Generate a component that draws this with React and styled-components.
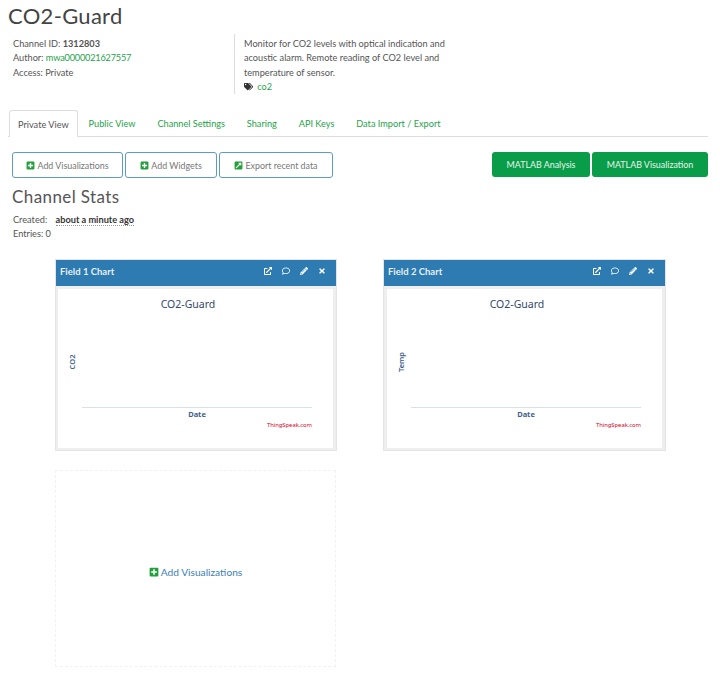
import React from "react";
import styled, { createGlobalStyle } from "styled-components";
import {
  FaPlusSquare,
  FaExternalLinkSquareAlt,
  FaExternalLinkAlt,
  FaRegComment,
  FaPencilAlt,
  FaTimes,
  FaTags,
} from "react-icons/fa";

const GlobalStyle = createGlobalStyle`
  body {
    margin: 0;
    background: #fff;
    color: #555;
    font-family: Lato, "Noto Sans", sans-serif;
    font-size: 9.2px;
  }
`;

const Page = styled.div`
  width: 720px;
  height: 675px;
  overflow: hidden;
  padding: 0 12px 0 8px;
  box-sizing: border-box;
`;

const Title = styled.h1`
  margin: 0;
  padding-top: 2px;
  height: 32px;
  font-family: Lato, sans-serif;
  font-weight: 400;
  font-size: 22px;
  line-height: 27px;
  letter-spacing: 0.3px;
  color: #444;
`;

const Info = styled.div`
  display: flex;
  height: 60px;
  padding-left: 5px;
`;

const InfoLeft = styled.div`
  width: 221px;
  line-height: 14.3px;
  padding-top: 3px;
`;

const InfoRight = styled.div`
  width: 214px;
  padding-left: 9px;
  border-left: 1px solid #ddd;
  line-height: 14.3px;
  padding-top: 3px;
`;

const GreenLink = styled.a`
  color: #1fa34a;
  letter-spacing: ${(p) => (p.$tight ? "-0.2px" : "0")};
`;

const TagRow = styled.div`
  display: flex;
  align-items: center;
  gap: 4px;
  color: #333;
`;

const Tabs = styled.div`
  display: flex;
  margin-top: 16px;
  height: 26px;
  padding-left: 1px;
  border-bottom: 1px solid #ddd;
`;

const Tab = styled.div`
  height: ${(p) => (p.$active ? "27px" : "26px")};
  box-sizing: border-box;
  padding: 0 ${(p) => (p.$active ? "8px" : "10.9px")};
  line-height: 27px;
  color: ${(p) => (p.$active ? "#555" : "#1fa34a")};
  background: #fff;
  ${(p) =>
    p.$active &&
    `border: 1px solid #ddd; border-bottom: 0; border-radius: 3px 3px 0 0;`}
`;

const Toolbar = styled.div`
  display: flex;
  justify-content: space-between;
  margin-top: 15px;
  padding-left: 4px;
`;

const ButtonGroup = styled.div`
  display: flex;
  gap: 2px;
`;

const OutlineButton = styled.div`
  display: flex;
  align-items: center;
  justify-content: center;
  gap: 2px;
  width: ${(p) => p.$width}px;
  height: 26px;
  box-sizing: border-box;
  border: 1px solid #5d9ac4;
  border-radius: 3px;
  font-family: Lato, sans-serif;
  font-size: 8.9px;
  color: #777;
  svg {
    color: #22a03c;
    font-size: 9px;
  }
`;

const GreenButton = styled.div`
  display: flex;
  align-items: center;
  justify-content: center;
  width: ${(p) => p.$width}px;
  height: 25px;
  box-sizing: border-box;
  border-radius: 3px;
  background: #0a9d49;
  font-family: Lato, sans-serif;
  font-size: 8.9px;
  color: #e8f5ec;
`;

const SectionTitle = styled.h2`
  margin: 8px 0 0 4px;
  font-family: Lato, sans-serif;
  font-weight: 400;
  font-size: 17px;
  line-height: 21px;
  letter-spacing: 0.4px;
  color: #555;
`;

const Stats = styled.div`
  margin: 6px 0 0 5px;
  line-height: 13.5px;
`;

const Ago = styled.span`
  margin-left: 6px;
  color: #333;
  font-weight: 700;
  border-bottom: 1px dotted #999;
`;

const Grid = styled.div`
  display: grid;
  grid-template-columns: 282px 283px;
  column-gap: 46px;
  row-gap: 19px;
  margin: 19px 0 0 47px;
`;

const Panel = styled.div`
  height: 192px;
  box-sizing: border-box;
  background: #eee;
  border: 1px solid #e4e4e4;
`;

const PanelHead = styled.div`
  display: flex;
  align-items: center;
  justify-content: space-between;
  height: 26px;
  box-sizing: border-box;
  padding: 0 10px 4px 4px;
  background: #2e7bb1;
  color: #e6eef5;
  font-weight: 700;
  font-size: 9.5px;
`;

const PanelIcons = styled.div`
  display: flex;
  align-items: center;
  gap: 10px;
  color: #fff;
  font-size: 8px;
`;

const ChartBox = styled.div`
  height: 159px;
  margin: 3px 3px 0 ${(p) => p.$left}px;
  background: #fff;
`;

const EmptySlot = styled.div`
  display: flex;
  align-items: center;
  justify-content: center;
  gap: 2px;
  width: 281px;
  height: 197px;
  box-sizing: border-box;
  padding-top: 7px;
  border: 1px dashed #f2f2f2;
  font-family: Lato, sans-serif;
  font-size: 10.2px;
  color: #3d7fb8;
  svg {
    color: #22a03c;
    font-size: 10px;
  }
`;

function Chart({ axis }) {
  return (
    <svg width="275" height="159" viewBox="0 0 275 159" fontFamily="Noto Sans, sans-serif">
      <text x="130" y="19" textAnchor="middle" fontSize="10.5" fill="#33486b">
        CO2-Guard
      </text>
      <text
        transform="translate(17 73) rotate(-90)"
        textAnchor="middle"
        fontSize="7.5"
        fontWeight="600"
        fill="#3f5f8c"
      >
        {axis}
      </text>
      <rect x="24" y="118" width="230" height="1" fill="#d8e0ea" />
      <text x="139" y="128" textAnchor="middle" fontSize="7.5" fontWeight="700" fill="#3f5f8c">
        Date
      </text>
      <text x="254" y="138" textAnchor="end" fontSize="5.8" fill="#d0021b">
        ThingSpeak.com
      </text>
    </svg>
  );
}

function ChartPanel({ name, axis, left }) {
  return (
    <Panel>
      <PanelHead>
        {name}
        <PanelIcons>
          <FaExternalLinkAlt />
          <FaRegComment />
          <FaPencilAlt />
          <FaTimes />
        </PanelIcons>
      </PanelHead>
      <ChartBox $left={left}>
        <Chart axis={axis} />
      </ChartBox>
    </Panel>
  );
}

export default function App() {
  return (
    <Page>
      <GlobalStyle />
      <Title>CO2-Guard</Title>
      <Info>
        <InfoLeft>
          <div>
            Channel ID: <b>1312803</b>
          </div>
          <div>
            Author: <GreenLink $tight>mwa0000021627557</GreenLink>
          </div>
          <div>Access: Private</div>
        </InfoLeft>
        <InfoRight>
          Monitor for CO2 levels with optical indication and
          <br />
          acoustic alarm. Remote reading of CO2 level and
          <br />
          temperature of sensor.
          <TagRow>
            <FaTags />
            <GreenLink>co2</GreenLink>
          </TagRow>
        </InfoRight>
      </Info>
      <Tabs>
        <Tab $active>Private View</Tab>
        <Tab>Public View</Tab>
        <Tab>Channel Settings</Tab>
        <Tab>Sharing</Tab>
        <Tab>API Keys</Tab>
        <Tab>Data Import / Export</Tab>
      </Tabs>
      <Toolbar>
        <ButtonGroup>
          <OutlineButton $width={111}>
            <FaPlusSquare /> Add Visualizations
          </OutlineButton>
          <OutlineButton $width={92}>
            <FaPlusSquare /> Add Widgets
          </OutlineButton>
          <OutlineButton $width={114}>
            <FaExternalLinkSquareAlt /> Export recent data
          </OutlineButton>
        </ButtonGroup>
        <ButtonGroup>
          <GreenButton $width={98}>MATLAB Analysis</GreenButton>
          <GreenButton $width={116}>MATLAB Visualization</GreenButton>
        </ButtonGroup>
      </Toolbar>
      <SectionTitle>Channel Stats</SectionTitle>
      <Stats>
        <div>
          Created: <Ago>about a minute ago</Ago>
        </div>
        <div>Entries: 0</div>
      </Stats>
      <Grid>
        <ChartPanel name="Field 1 Chart" axis="CO2" left={2} />
        <ChartPanel name="Field 2 Chart" axis="Temp" left={3} />
        <EmptySlot>
          <FaPlusSquare /> Add Visualizations
        </EmptySlot>
      </Grid>
    </Page>
  );
}
